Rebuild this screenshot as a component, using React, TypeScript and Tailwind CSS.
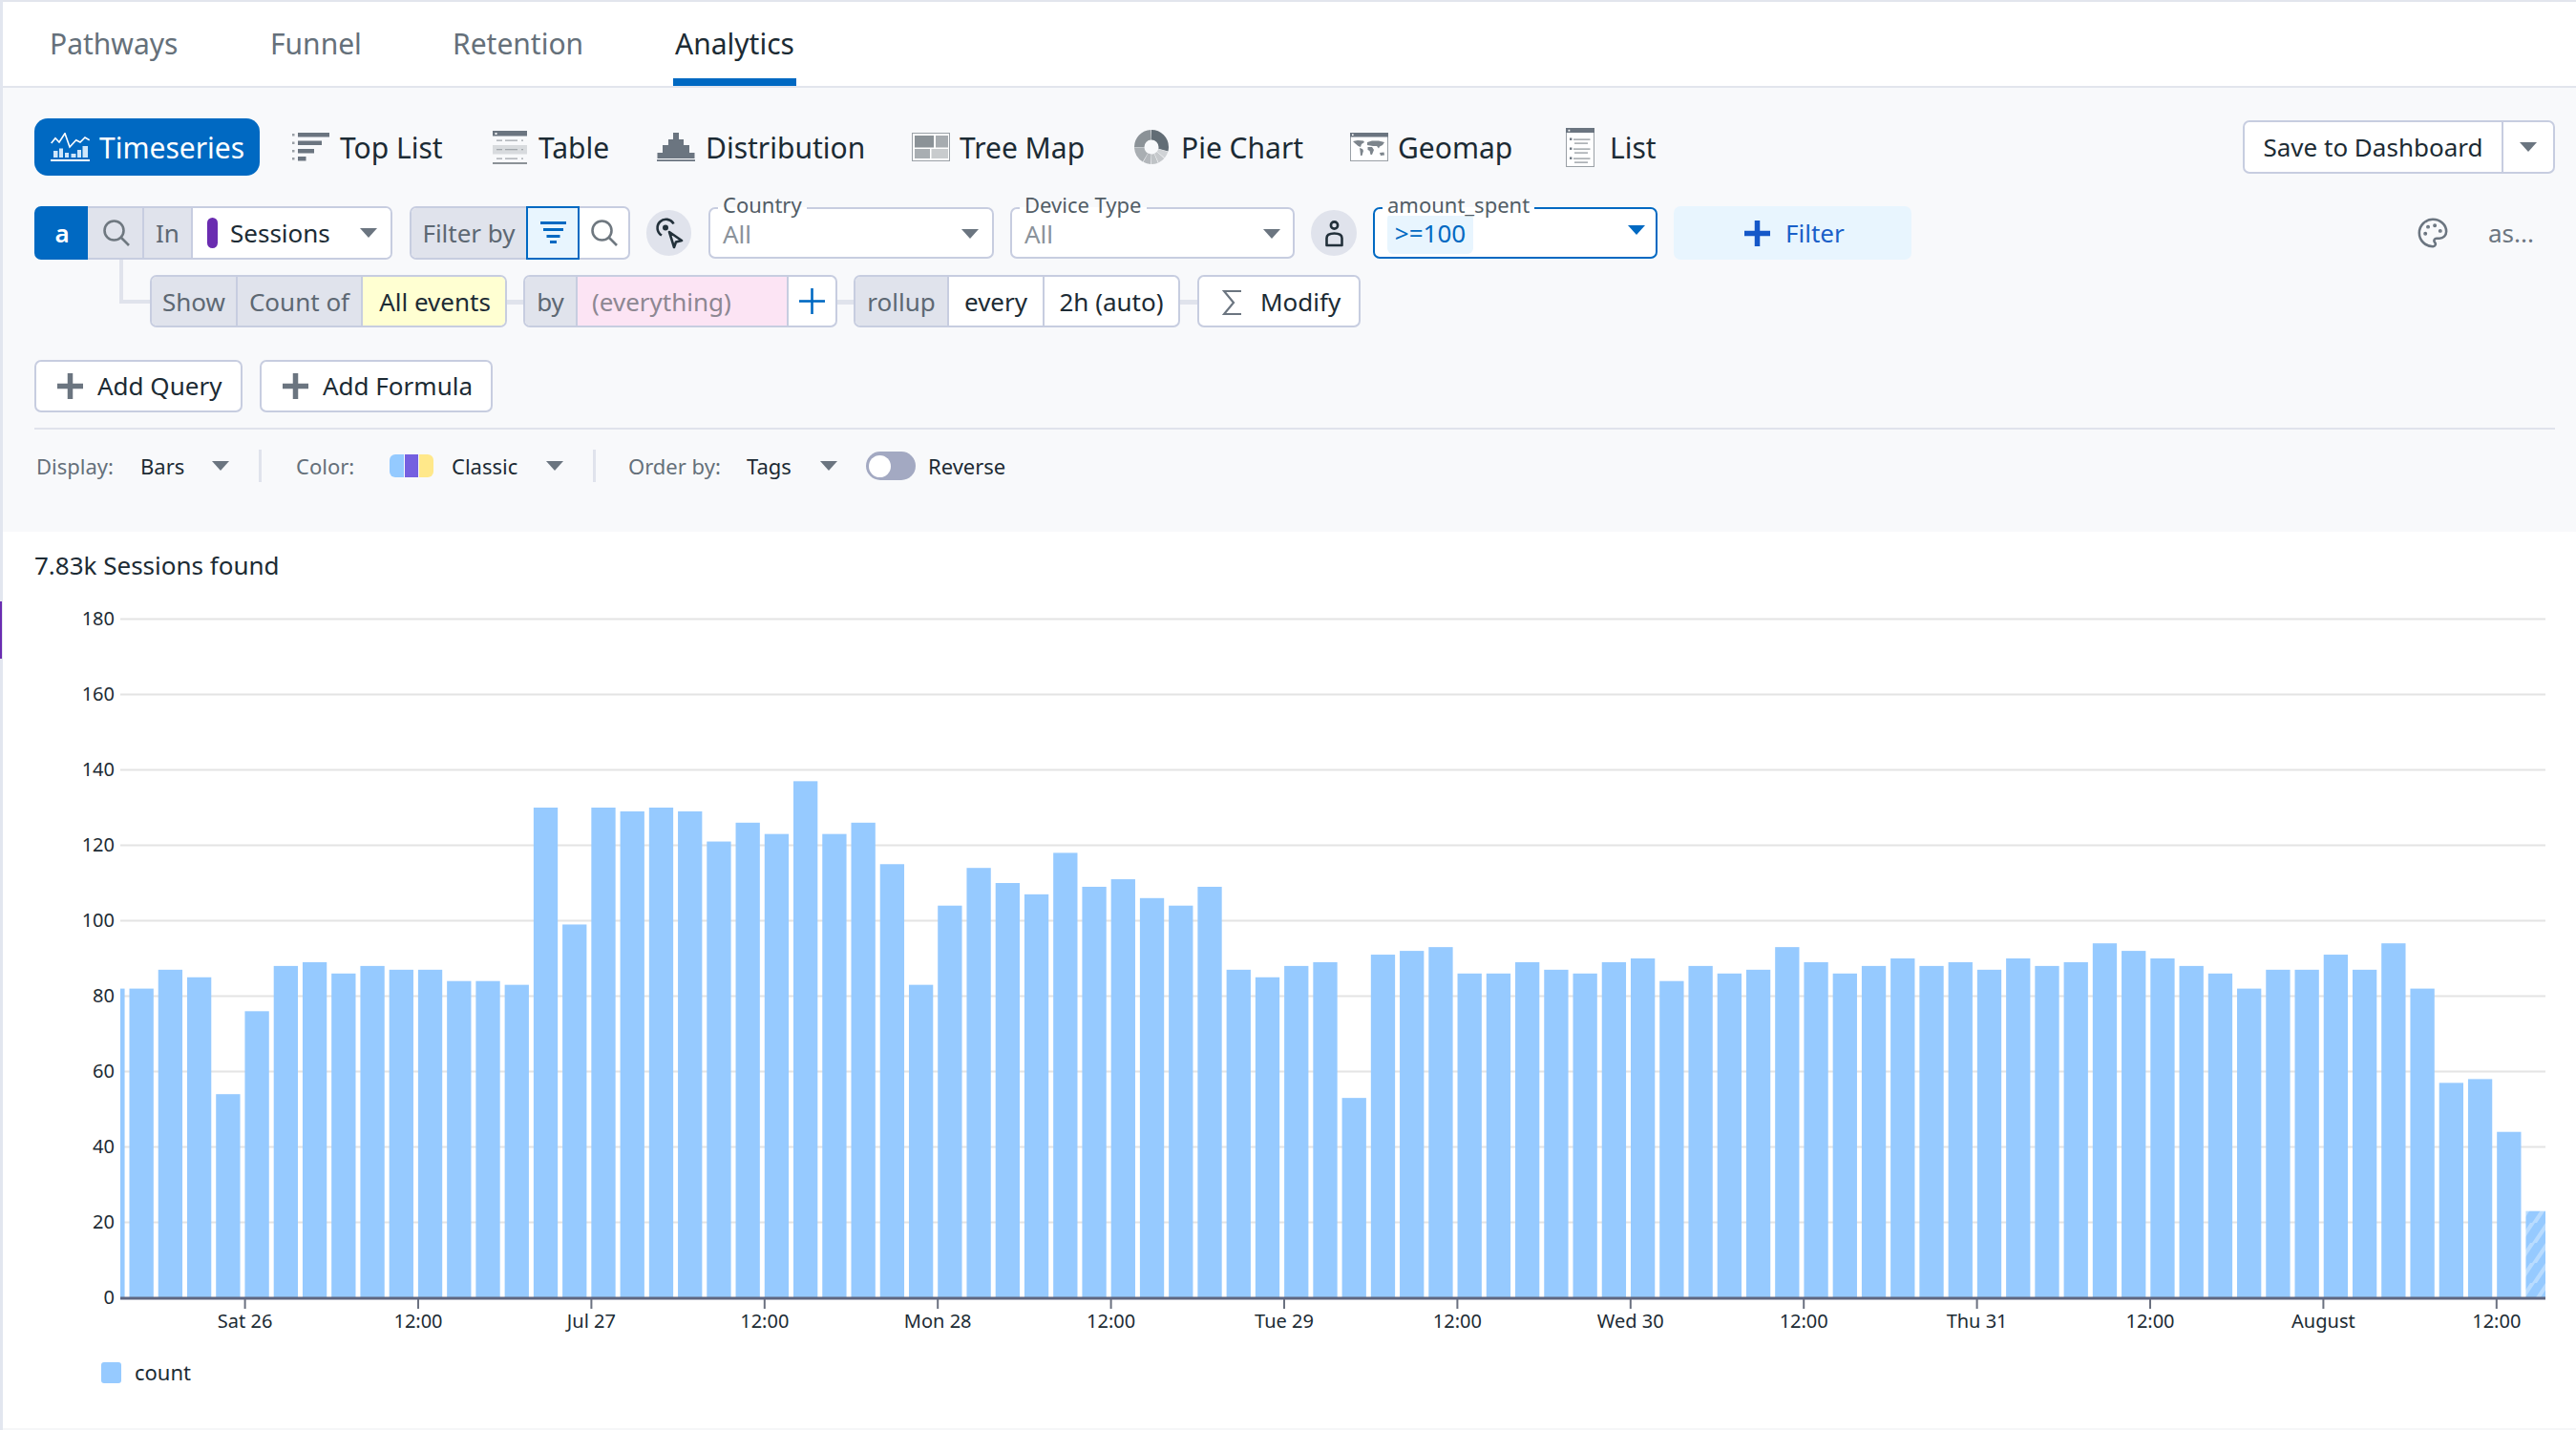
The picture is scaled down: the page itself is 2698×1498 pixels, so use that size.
import React from "react";
import { Palette } from "lucide-react";

const values = [82,82,87,85,54,76,88,89,86,88,87,87,84,84,83,130,99,130,129,130,129,121,126,123,137,123,126,115,83,104,114,110,107,118,109,111,106,104,109,87,85,88,89,53,91,92,93,86,86,89,87,86,89,90,84,88,86,87,93,89,86,88,90,88,89,87,90,88,89,94,92,90,88,86,82,87,87,91,87,94,82,57,58,44,23];
const xLabels = ["Sat 26","12:00","Jul 27","12:00","Mon 28","12:00","Tue 29","12:00","Wed 30","12:00","Thu 31","12:00","August","12:00"];
const BASE = 1359.5;
const UNIT = 3.95;

function Caret({ blue }: { blue?: boolean }) {
  return (
    <svg width="18" height="10" viewBox="0 0 18 10" className="shrink-0">
      <path d="M0 0H18L9 10Z" fill={blue ? "#0069c2" : "#6b7580"} />
    </svg>
  );
}

function Search() {
  return (
    <svg width="28" height="28" viewBox="0 0 28 28" fill="none" stroke="#6f7880" strokeWidth="2.6">
      <circle cx="11.5" cy="11.5" r="10" />
      <path d="M19 19L27 27" />
    </svg>
  );
}

function Plus({ size, bar, color }: { size: number; bar: number; color: string }) {
  const o = (size - bar) / 2;
  return (
    <svg width={size} height={size} viewBox={`0 0 ${size} ${size}`} className="shrink-0">
      <rect x={o} y="0" width={bar} height={size} fill={color} />
      <rect x="0" y={o} width={size} height={bar} fill={color} />
    </svg>
  );
}

function TimeseriesIcon() {
  return (
    <svg width="41" height="31" viewBox="0 0 41 31" className="shrink-0">
      <polyline points="0.7,11 5,5.7 9,10 15,0.7 20,15 26.7,7.7 31,10 36,5 40.7,7.7" fill="none" stroke="#fff" strokeWidth="1.6" />
      <g fill="#cfe6fa">
        <rect x="3" y="19" width="4.5" height="7" />
        <rect x="9" y="16.5" width="4" height="9.5" />
        <rect x="15" y="21" width="4" height="5" />
        <rect x="21.5" y="22" width="5" height="4" />
        <rect x="28" y="18" width="4" height="8" />
        <rect x="33.5" y="14" width="5.5" height="12" />
      </g>
      <rect x="0" y="28" width="41" height="2" fill="#fff" />
    </svg>
  );
}

function TopListIcon() {
  return (
    <svg width="40" height="30" viewBox="0 0 40 30" className="shrink-0">
      <g fill="#6b7580">
        <rect x="6" y="0" width="33" height="4.5" />
        <rect x="6" y="8.5" width="25" height="4.5" />
        <rect x="6" y="17" width="17" height="4.5" />
        <rect x="6" y="25" width="8.5" height="4.5" />
      </g>
      <g fill="#9aa0a6">
        <rect x="0" y="1" width="2.5" height="2.5" />
        <rect x="0" y="9.5" width="2.5" height="2.5" />
        <rect x="0" y="18" width="2.5" height="2.5" />
        <rect x="0" y="26" width="2.5" height="2.5" />
      </g>
    </svg>
  );
}

function TableIcon() {
  return (
    <svg width="36" height="35" viewBox="0 0 36 35" className="shrink-0">
      <rect x="0" y="0" width="36" height="5.5" fill="#6b7580" />
      <rect x="2.5" y="2" width="2" height="2" fill="#fff" />
      <rect x="0" y="15" width="36" height="9.5" fill="#d8dbde" />
      <g fill="#a3a8ad">
        <rect x="4" y="9.5" width="6" height="1.3" />
        <rect x="13" y="9.5" width="13" height="1.3" />
        <rect x="30" y="9.5" width="2" height="1.3" />
        <rect x="4" y="19" width="6" height="1.3" />
        <rect x="13" y="19" width="13" height="1.3" />
        <rect x="30" y="19" width="2" height="1.3" />
        <rect x="4" y="28.5" width="6" height="1.3" />
        <rect x="13" y="28.5" width="13" height="1.3" />
        <rect x="30" y="28.5" width="2" height="1.3" />
      </g>
      <rect x="0" y="33" width="36" height="2" fill="#8b9297" />
    </svg>
  );
}

function DistributionIcon() {
  return (
    <svg width="40" height="30" viewBox="0 0 40 30" className="shrink-0">
      <path d="M17 0H23V7H28V13H34V21H39.5V27H0.5V21H6V13H12V7H17Z" fill="#6b7580" />
      <rect x="0" y="28.2" width="40" height="1.8" fill="#6b7580" />
    </svg>
  );
}

function TreeMapIcon() {
  return (
    <svg width="40" height="30" viewBox="0 0 40 30" className="shrink-0">
      <rect x="0.5" y="0.5" width="39" height="29" fill="#fff" stroke="#9aa0a6" />
      <rect x="3" y="3" width="20" height="12.5" fill="#8b9297" />
      <rect x="25" y="3" width="13" height="12.5" fill="#a7acb0" />
      <rect x="3" y="17" width="16" height="10" fill="#a9aeb2" />
      <rect x="20.5" y="17" width="17.5" height="10" fill="#c8cbcd" />
    </svg>
  );
}

function PieIcon() {
  const segs: [string, number, number][] = [
    ["#626d75", 0, 29],
    ["#d0d3d6", 29.6, 6.5],
    ["#c6c9cc", 36.7, 6.5],
    ["#bfc3c6", 43.8, 6.5],
    ["#b3b7bb", 50.9, 7],
    ["#a9aeb2", 58.5, 15.5],
    ["#8b9297", 74.6, 24.8],
  ];
  return (
    <svg width="36" height="36" viewBox="0 0 36 36" className="shrink-0">
      <g transform="rotate(-90 18 18)" fill="none" strokeWidth="10.5">
        {segs.map(([c, s, l], i) => (
          <circle key={i} cx="18" cy="18" r="12.75" stroke={c} pathLength={100} strokeDasharray={`${l} ${100 - l}`} strokeDashoffset={-s} />
        ))}
      </g>
    </svg>
  );
}

function GeomapIcon() {
  return (
    <svg width="40" height="30" viewBox="0 0 40 30" className="shrink-0">
      <rect x="0.5" y="0.5" width="39" height="29" fill="#fff" stroke="#9aa0a6" />
      <rect x="0" y="0" width="40" height="4.5" fill="#6b7580" />
      <rect x="2" y="1.4" width="1.6" height="1.6" fill="#fff" />
      <g fill="#7d858c">
        <path d="M3 9L8 8L14 8.5L15 10L12 12L11 15L8.5 14L5 11Z" />
        <path d="M10 16L13 17L14 19L12.5 24L11 24L10.5 19Z" />
        <path d="M18 10L23 8.5L30 8.5L36 10L34 13L31 14.5L30 16.5L28 14L24 14L21 13.5L18 13Z" />
        <path d="M18.5 15L23 15L25 18L23 23L21.5 23L20.5 19L18.5 18Z" />
        <path d="M31 21L35.5 20.5L36 23.5L32 24Z" />
      </g>
    </svg>
  );
}

function ListIcon() {
  const ys = [11.5, 21.5, 31.5];
  return (
    <svg width="30" height="41" viewBox="0 0 30 41" className="shrink-0">
      <rect x="0.5" y="0.5" width="29" height="40" fill="#fff" stroke="#9aa0a6" />
      <rect x="0" y="0" width="30" height="5" fill="#6b7580" />
      <rect x="2.5" y="1.8" width="1.8" height="1.8" fill="#fff" />
      {ys.map((y) => (
        <g key={y} fill="#8b9297">
          <rect x="4" y={y - 1} width="2.4" height="2.4" fill="#6b7580" />
          <rect x="8" y={y} width="17.5" height="1.2" />
          <rect x="9" y={y + 4} width="14" height="1.2" />
        </g>
      ))}
    </svg>
  );
}

function Cell({ children, className }: { children: React.ReactNode; className: string }) {
  return <div className={`flex h-full shrink-0 items-center ${className}`}>{children}</div>;
}

function Field({ label, width, value, active }: { label: string; width: string; value: React.ReactNode; active?: boolean }) {
  return (
    <div className={`relative h-[54px] shrink-0 rounded-[7px] border-2 bg-white ${width} ${active ? "border-[#0069c2]" : "border-[#c7cde0]"}`}>
      <span className="absolute left-[8px] top-[-17px] bg-[linear-gradient(#f8f9fb_62%,#ffffff_62%)] px-[5px] text-[22px] leading-[24px] text-[#525d66]">{label}</span>
      {value}
    </div>
  );
}

export default function App() {
  return (
    <div className="relative flex h-[1498px] w-[2698px] flex-col overflow-hidden bg-white font-['Noto_Sans',sans-serif] text-[26px] text-[#1c2b34]">
      {/* tabs */}
      <div className="flex h-[92px] shrink-0 items-center border-b-2 border-[#e2e5ed] bg-white pl-[52px] text-[30px]">
        <div className="w-[231px] text-[#65707a]">Pathways</div>
        <div className="w-[191px] text-[#65707a]">Funnel</div>
        <div className="w-[231px] text-[#65707a]">Retention</div>
        <div className="relative flex h-full w-[129px] items-center justify-center">
          Analytics
          <span className="absolute bottom-0 left-0 h-[8px] w-full bg-[#0069c2]" />
        </div>
      </div>

      {/* query area */}
      <div className="relative h-[465px] shrink-0 bg-[#f8f9fb]">
        {/* visualisations */}
        <div className="absolute left-[36px] top-[32px] flex h-[60px] w-[2640px] items-center text-[30px]">
          <div className="flex h-full w-[236px] items-center gap-[10px] rounded-[14px] bg-[#0069c2] pl-[17px] text-white">
            <TimeseriesIcon />
            Timeseries
          </div>
          <div className="ml-[34px] flex w-[210px] items-center gap-[10px]"><TopListIcon />Top List</div>
          <div className="flex w-[172px] items-center gap-[12px]"><TableIcon />Table</div>
          <div className="flex w-[267px] items-center gap-[11px]"><DistributionIcon />Distribution</div>
          <div className="flex w-[233px] items-center gap-[10px]"><TreeMapIcon />Tree Map</div>
          <div className="flex w-[226px] items-center gap-[13px]"><PieIcon />Pie Chart</div>
          <div className="flex w-[226px] items-center gap-[10px]"><GeomapIcon />Geomap</div>
          <div className="flex items-center gap-[16px]"><ListIcon />List</div>
          <div className="ml-auto flex h-[56px] w-[327px] rounded-[7px] border-2 border-[#c7cde0] bg-white text-[26px]">
            <div className="flex h-full w-[271px] items-center justify-center border-r-2 border-[#c7cde0]">Save to Dashboard</div>
            <div className="flex flex-1 items-center justify-center"><Caret /></div>
          </div>
        </div>

        {/* query row 1 */}
        <div className="absolute left-[36px] top-[124px] flex h-[56px] w-[2620px] items-center text-[26px]">
          <div className="flex h-[56px] w-[375px] shrink-0">
            <div className="flex h-full w-[56px] items-center justify-center rounded-l-[7px] bg-[#0069c2] pl-[2px] font-semibold text-white">a</div>
            <div className="flex h-full flex-1 overflow-hidden rounded-r-[7px] border-2 border-l-0 border-[#c7cde0]">
              <Cell className="w-[59px] justify-center border-r-2 border-[#c7cde0] bg-[#e0e3ec] pl-[2px]"><Search /></Cell>
              <Cell className="w-[51px] justify-center border-r-2 border-[#c7cde0] bg-[#e0e3ec] text-[#5d6873]">In</Cell>
              <Cell className="flex-1 bg-white pl-[15px]">
                <span className="h-[32px] w-[11px] rounded-full bg-[#6a2cb0]" />
                <span className="ml-[13px]">Sessions</span>
                <span className="ml-[31px]"><Caret /></span>
              </Cell>
            </div>
          </div>
          <div className="ml-[18px] flex h-[56px] w-[231px] shrink-0 rounded-[7px] border-2 border-[#c7cde0] bg-white">
            <Cell className="w-[120px] justify-center rounded-l-[5px] bg-[#e0e3ec] text-[#5d6873]">Filter by</Cell>
            <div className="my-[-2px] flex h-[56px] w-[56px] shrink-0 items-center justify-center border-2 border-[#0069c2] bg-[#e8f5fe]">
              <svg width="27" height="24" viewBox="0 0 27 24">
                <g fill="#0069c2">
                  <rect x="0" y="0" width="27" height="3" />
                  <rect x="3" y="7" width="21" height="3" />
                  <rect x="6.5" y="14" width="14" height="3" />
                  <rect x="10" y="20" width="7" height="3" />
                </g>
              </svg>
            </div>
            <Cell className="flex-1 justify-center"><Search /></Cell>
          </div>
          <div className="ml-[17px] flex h-[48px] w-[47px] shrink-0 items-center justify-center rounded-full bg-[#e0e3ec]">
            <svg width="47" height="48" viewBox="0 0 47 48" fill="none" stroke="#22303a" strokeWidth="2.6">
              <path d="M16 26.5A9 9 0 1 1 28.5 14.5" />
              <circle cx="20" cy="18.5" r="3" fill="#22303a" stroke="none" />
              <path d="M24 23L37 32L31 33.5L29 39Z" strokeLinejoin="round" />
            </svg>
          </div>
          <div className="ml-[18px]">
            <Field label="Country" width="w-[299px]" value={
              <div className="flex h-full items-center justify-between pl-[13px] pr-[14px] pt-[2px] text-[#8a929a]">All<Caret /></div>
            } />
          </div>
          <div className="ml-[17px]">
            <Field label="Device Type" width="w-[298px]" value={
              <div className="flex h-full items-center justify-between pl-[13px] pr-[13px] pt-[2px] text-[#8a929a]">All<Caret /></div>
            } />
          </div>
          <div className="ml-[17px] flex h-[48px] w-[48px] shrink-0 items-center justify-center rounded-full bg-[#e0e3ec]">
            <svg width="48" height="48" viewBox="0 0 48 48" fill="none" stroke="#22303a" strokeWidth="2.6">
              <circle cx="24.5" cy="16" r="3.6" />
              <path d="M16.5 37V29.5C16.5 26 19.5 24.5 24.5 24.5C29.5 24.5 32.5 26 32.5 29.5V37Z" strokeLinejoin="round" />
            </svg>
          </div>
          <div className="ml-[17px]">
            <Field label="amount_spent" active width="w-[298px]" value={
              <div className="flex h-full items-center justify-between pl-[13px] pr-[11px]">
                <span className="flex h-[43px] w-[90px] items-center justify-center rounded-[6px] bg-[#e8f5fe] text-[#0069c2]">&gt;=100</span>
                <span className="mb-[6px]"><Caret blue /></span>
              </div>
            } />
          </div>
          <div className="ml-[17px] flex h-[56px] w-[249px] shrink-0 items-center gap-[16px] rounded-[7px] bg-[#e8f5fe] pl-[74px] text-[#1a5fc8]">
            <Plus size={27} bar={5.5} color="#1457c8" />
            Filter
          </div>
          <div className="ml-[529px]"><Palette size={34} strokeWidth={1.8} color="#6b7580" /></div>
          <div className="ml-[41px] text-[#6b7580]">as...</div>
        </div>

        {/* connectors */}
        <div className="absolute left-[125px] top-[180px] h-[46px] w-[4px] bg-[#e0e3ec]" />
        <div className="absolute left-[125px] top-[222px] h-[4px] w-[32px] bg-[#e0e3ec]" />
        <div className="absolute left-[531px] top-[222px] h-[5px] w-[17px] bg-[#e0e3ec]" />
        <div className="absolute left-[877px] top-[222px] h-[5px] w-[17px] bg-[#e0e3ec]" />
        <div className="absolute left-[1236px] top-[222px] h-[5px] w-[18px] bg-[#e0e3ec]" />

        {/* query row 2 */}
        <div className="absolute left-[157px] top-[196px] flex h-[55px] items-center text-[26px]">
          <div className="flex h-full w-[374px] overflow-hidden rounded-[7px] border-2 border-[#c7cde0]">
            <Cell className="w-[90px] justify-center border-r-2 border-[#c7cde0] bg-[#e0e3ec] pt-[2px] text-[#5d6873]">Show</Cell>
            <Cell className="w-[131px] justify-center border-r-2 border-[#c7cde0] bg-[#e0e3ec] pt-[2px] text-[#5d6873]">Count of</Cell>
            <Cell className="flex-1 justify-center bg-[#ffffd2] pt-[2px] pl-[2px]">All events</Cell>
          </div>
          <div className="ml-[17px] flex h-full w-[329px] overflow-hidden rounded-[7px] border-2 border-[#c7cde0] bg-white">
            <Cell className="w-[55px] justify-center border-r-2 border-[#c7cde0] bg-[#e0e3ec] pt-[2px] text-[#5d6873]">by</Cell>
            <Cell className="w-[219px] bg-[#fce4f4] pl-[15px] pt-[2px] text-[#8d8792]">(everything)</Cell>
            <Cell className="flex-1 justify-center border-l-2 border-[#c7cde0]"><Plus size={27} bar={2.6} color="#0069c2" /></Cell>
          </div>
          <div className="ml-[17px] flex h-full w-[342px] overflow-hidden rounded-[7px] border-2 border-[#c7cde0] bg-white">
            <Cell className="w-[98px] justify-center border-r-2 border-[#c7cde0] bg-[#e0e3ec] pt-[2px] text-[#5d6873]">rollup</Cell>
            <Cell className="w-[100px] justify-center border-r-2 border-[#c7cde0] pt-[2px]">every</Cell>
            <Cell className="flex-1 justify-center pt-[2px]">2h (auto)</Cell>
          </div>
          <div className="ml-[18px] flex h-full w-[171px] items-center gap-[19px] rounded-[7px] border-2 border-[#c7cde0] bg-white pl-[24px] pt-[2px]">
            <svg width="21" height="28" viewBox="0 0 21 28" fill="none" stroke="#6b7580" strokeWidth="2.2">
              <path d="M20 2H2L12 14L2 26H20" />
            </svg>
            Modify
          </div>
        </div>

        {/* add buttons */}
        <div className="absolute left-[36px] top-[285px] flex h-[55px] gap-[18px] text-[26px]">
          <div className="flex h-full w-[218px] items-center gap-[15px] rounded-[7px] border-2 border-[#c7cde0] bg-white pl-[22px]">
            <Plus size={27} bar={5.5} color="#6b7580" />
            Add Query
          </div>
          <div className="flex h-full w-[244px] items-center gap-[15px] rounded-[7px] border-2 border-[#c7cde0] bg-white pl-[22px]">
            <Plus size={27} bar={5.5} color="#6b7580" />
            Add Formula
          </div>
        </div>

        <div className="absolute left-[36px] top-[356px] h-[2px] w-[2640px] bg-[#e0e3ec]" />

        {/* display options */}
        <div className="absolute left-[38px] top-[379px] flex h-[34px] items-center text-[22px]">
          <span className="w-[109px] text-[#65707a]">Display:</span>
          <span className="w-[75px]">Bars</span>
          <Caret />
          <span className="ml-[31px] h-[34px] w-[3px] bg-[#e0e3ec]" />
          <span className="ml-[36px] w-[98px] text-[#65707a]">Color:</span>
          <span className="flex h-[24px] w-[46px] gap-[1px] overflow-hidden rounded-[6px]">
            <span className="flex-1 bg-[#94caff]" />
            <span className="flex-1 bg-[#7560e0]" />
            <span className="flex-1 bg-[#ffe88a]" />
          </span>
          <span className="ml-[19px] w-[99px]">Classic</span>
          <Caret />
          <span className="ml-[31px] h-[34px] w-[3px] bg-[#e0e3ec]" />
          <span className="ml-[34px] w-[124px] text-[#65707a]">Order by:</span>
          <span className="w-[77px]">Tags</span>
          <Caret />
          <span className="ml-[30px] flex h-[30px] w-[52px] items-center rounded-full bg-[#a3a9c2] pl-[3px]">
            <span className="h-[23px] w-[23px] rounded-full bg-white" />
          </span>
          <span className="ml-[13px]">Reverse</span>
        </div>
      </div>

      {/* results */}
      <div className="relative flex-1 bg-white">
        <div className="absolute left-[36px] top-[17px] text-[26px] leading-[36px]">7.83k Sessions found</div>
        <div className="absolute bottom-0 left-0 h-[2px] w-full bg-[#f5f6f8]" />
        <div className="absolute left-[106px] top-[864px] flex items-center gap-[14px] text-[22px]">
          <span className="h-[22px] w-[21px] rounded-[3px] bg-[#96caff]" />
          count
        </div>
      </div>

      {/* chart */}
      <svg className="absolute left-0 top-0" width="2698" height="1498" viewBox="0 0 2698 1498" style={{ pointerEvents: "none" }}>
        <defs>
          <pattern id="hatch" patternUnits="userSpaceOnUse" width="16" height="21">
            <rect width="16" height="21" fill="#96caff" />
            <path d="M-4 21L10 0H15L1 21ZM12 21L26 0H31L17 21Z" fill="#b9dcff" />
          </pattern>
        </defs>
        {[20, 40, 60, 80, 100, 120, 140, 160, 180].map((v) => (
          <line key={v} x1="126" x2="2666" y1={BASE - v * UNIT} y2={BASE - v * UNIT} stroke="#e4e4e4" strokeWidth="2" />
        ))}
        {values.map((v, i) => {
          const x = 135.5 + (i - 1) * 30.24;
          const left = Math.max(x, 126);
          const right = Math.min(x + 25.3, 2666);
          return (
            <rect key={i} x={left} y={BASE - v * UNIT} width={right - left} height={v * UNIT} fill={i === 84 ? "url(#hatch)" : "#96caff"} />
          );
        })}
        <rect x="126" y="1358.5" width="2540" height="3" fill="#5f6680" />
        {xLabels.map((l, k) => {
          const x = 256.6 + k * 181.4;
          return (
            <g key={k}>
              <rect x={x - 1} y="1361" width="2" height="10" fill="#6b7180" />
              <text x={x} y="1390.5" textAnchor="middle" fontSize="20" fill="#1c2b34" fontFamily="'Noto Sans', sans-serif">{l}</text>
            </g>
          );
        })}
        {[0, 20, 40, 60, 80, 100, 120, 140, 160, 180].map((v) => (
          <text key={v} x="120" y={BASE - v * UNIT + 6} textAnchor="end" fontSize="20" fill="#1c2b34" fontFamily="'Noto Sans', sans-serif">{v}</text>
        ))}
      </svg>

      {/* page edge */}
      <div className="absolute left-0 top-0 h-[2px] w-full bg-[#e2e5ed]" />
      <div className="absolute bottom-0 left-0 top-0 w-[3px] bg-[#e2e6ef]" />
      <div className="absolute left-0 top-[630px] h-[60px] w-[2px] bg-[#6a2cb0]" />
    </div>
  );
}
